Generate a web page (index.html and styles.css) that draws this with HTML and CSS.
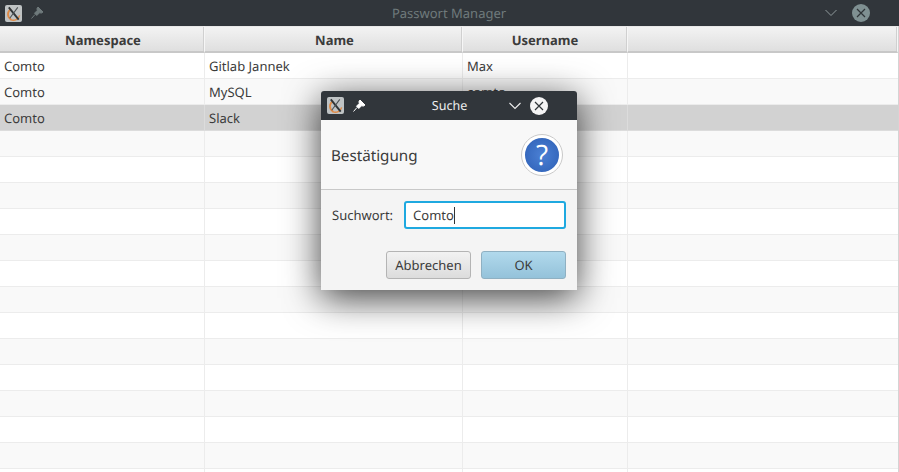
FILE: index.html
```html
<!DOCTYPE html>
<html lang="de">
<head>
    <meta charset="UTF-8">
    <title>Passwort Manager</title>
    <link rel="stylesheet" href="styles.css">
</head>
<body>
    <div class="titlebar">
        <span class="appicon">
            <svg width="17" height="17" viewBox="0 0 18 18"><path d="M6.5 15.5 C2 12.5 2 7 6.5 4.5" fill="none" stroke="#e08a45" stroke-width="1.9"/><path d="M6 15.5 C10 17.5 14.5 15 15.5 11" fill="none" stroke="#e08a45" stroke-width="1.5"/><path d="M4 2.5 L14.5 15.5" stroke="#2f3538" stroke-width="2"/><path d="M13.5 2.5 L5 14" stroke="#4a5053" stroke-width="1.1"/></svg>
        </span>
        <svg class="pin" width="14" height="14" viewBox="0 0 14 14"><path d="M8 1 L13 6 L11.5 7 L9.5 6.8 L6.8 9.5 L4.5 7.2 L7.2 4.5 L7 2.5 Z M5 8.5 L1.5 12.5" fill="#6f7a7c" stroke="#6f7a7c"/></svg>
        <span class="title-text">Passwort Manager</span>
        <svg class="chevron" width="14" height="8" viewBox="0 0 14 8"><path d="M1.5 1 L7 6.5 L12.5 1" fill="none" stroke="#8f9a9c" stroke-width="1"/></svg>
        <svg class="closebtn" width="18" height="18" viewBox="0 0 18 18"><circle cx="9" cy="9" r="9" fill="#7f9092"/><path d="M5 5 L13 13 M13 5 L5 13" stroke="#2f3538" stroke-width="1.2"/></svg>
    </div>

    <div class="table">
        <div class="row head">
            <div class="cell c1">Namespace</div>
            <div class="cell c2">Name</div>
            <div class="cell c3">Username</div>
            <div class="cell c4"></div>
        </div>
        <div class="row"><div class="cell c1">Comto</div><div class="cell c2">Gitlab Jannek</div><div class="cell c3">Max</div><div class="cell c4"></div></div>
        <div class="row odd"><div class="cell c1">Comto</div><div class="cell c2">MySQL</div><div class="cell c3">comto</div><div class="cell c4"></div></div>
        <div class="row selected"><div class="cell c1">Comto</div><div class="cell c2">Slack</div><div class="cell c3"></div><div class="cell c4"></div></div>
        <div class="row odd"><div class="cell c1"></div><div class="cell c2"></div><div class="cell c3"></div><div class="cell c4"></div></div>
        <div class="row"><div class="cell c1"></div><div class="cell c2"></div><div class="cell c3"></div><div class="cell c4"></div></div>
        <div class="row odd"><div class="cell c1"></div><div class="cell c2"></div><div class="cell c3"></div><div class="cell c4"></div></div>
        <div class="row"><div class="cell c1"></div><div class="cell c2"></div><div class="cell c3"></div><div class="cell c4"></div></div>
        <div class="row odd"><div class="cell c1"></div><div class="cell c2"></div><div class="cell c3"></div><div class="cell c4"></div></div>
        <div class="row"><div class="cell c1"></div><div class="cell c2"></div><div class="cell c3"></div><div class="cell c4"></div></div>
        <div class="row odd"><div class="cell c1"></div><div class="cell c2"></div><div class="cell c3"></div><div class="cell c4"></div></div>
        <div class="row"><div class="cell c1"></div><div class="cell c2"></div><div class="cell c3"></div><div class="cell c4"></div></div>
        <div class="row odd"><div class="cell c1"></div><div class="cell c2"></div><div class="cell c3"></div><div class="cell c4"></div></div>
        <div class="row"><div class="cell c1"></div><div class="cell c2"></div><div class="cell c3"></div><div class="cell c4"></div></div>
        <div class="row odd"><div class="cell c1"></div><div class="cell c2"></div><div class="cell c3"></div><div class="cell c4"></div></div>
        <div class="row"><div class="cell c1"></div><div class="cell c2"></div><div class="cell c3"></div><div class="cell c4"></div></div>
        <div class="row odd"><div class="cell c1"></div><div class="cell c2"></div><div class="cell c3"></div><div class="cell c4"></div></div>
        <div class="row"><div class="cell c1"></div><div class="cell c2"></div><div class="cell c3"></div><div class="cell c4"></div></div>
    </div>

    <div class="dialog">
        <div class="dialog-bar">
            <span class="appicon">
                <svg width="17" height="17" viewBox="0 0 18 18"><path d="M6.5 15.5 C2 12.5 2 7 6.5 4.5" fill="none" stroke="#e08a45" stroke-width="1.9"/><path d="M6 15.5 C10 17.5 14.5 15 15.5 11" fill="none" stroke="#e08a45" stroke-width="1.5"/><path d="M4 2.5 L14.5 15.5" stroke="#2f3538" stroke-width="2"/><path d="M13.5 2.5 L5 14" stroke="#4a5053" stroke-width="1.1"/></svg>
            </span>
            <svg class="pin" width="14" height="14" viewBox="0 0 14 14"><path d="M8 1 L13 6 L11.5 7 L9.5 6.8 L6.8 9.5 L4.5 7.2 L7.2 4.5 L7 2.5 Z M5 8.5 L1.5 12.5" fill="#fff" stroke="#fff"/></svg>
            <span class="dialog-title">Suche</span>
            <svg class="chevron" width="14" height="8" viewBox="0 0 14 8"><path d="M1.5 1 L7 6.5 L12.5 1" fill="none" stroke="#eee" stroke-width="1.1"/></svg>
            <svg class="closebtn" width="18" height="18" viewBox="0 0 18 18"><circle cx="9" cy="9" r="9" fill="#f4f4f4"/><path d="M5 5 L13 13 M13 5 L5 13" stroke="#2f3538" stroke-width="1.2"/></svg>
        </div>
        <div class="dialog-head">
            <span class="head-text">Bestätigung</span>
            <span class="question">?</span>
        </div>
        <div class="dialog-body">
            <div class="field">
                <label for="suchwort">Suchwort:</label>
                <div class="input" id="suchwort">Comto<span class="caret"></span></div>
            </div>
            <div class="buttons">
                <button type="button" class="btn">Abbrechen</button>
                <button type="button" class="btn btn-ok">OK</button>
            </div>
        </div>
    </div>
</body>
</html>
```

FILE: styles.css
```css
/* Window */
html, body {
    height: 100%;
}

body {
    margin: 0;
    overflow: hidden;
    background-color: #ffffff;
    color: #3b3b3b;
    font-family: "Noto Sans", "Open Sans", sans-serif;
    font-size: 13px;
    text-rendering: geometricPrecision;
}

.titlebar {
    display: flex;
    align-items: center;
    height: 26px;
    padding-left: 5px;
    background-color: #31363b;
}

.appicon {
    display: flex;
    width: 17px;
    height: 17px;
    border-radius: 2px;
    background-color: #bfc3c4;
}

.titlebar .pin {
    margin-left: 8px;
}

.title-text {
    flex: 1;
    margin-left: 30px;
    text-align: center;
    color: #6f7a7c;
    font-size: 13px;
}

.titlebar .chevron {
    margin-right: 14px;
}

.titlebar .closebtn {
    margin-right: 29px;
}

/* Table */
.table {
    border-right: 1px solid #d4d4d4;
}

.row {
    display: flex;
    height: 26px;
    background-color: #ffffff;
}

.row.odd {
    background-color: #f9f9f9;
}

.row.selected {
    background-color: #d2d2d2;
}

.cell {
    box-sizing: border-box;
    height: 26px;
    padding: 0 4px;
    line-height: 26px;
    border-right: 1px solid #ececec;
    border-bottom: 1px solid #ececec;
}

.row.selected .cell {
    border-color: #dcdcdc;
}

.c1 { width: 205px; }
.c2 { width: 258px; }
.c3 { width: 165px; }
.c4 { flex: 1; border-right: none; }

.row.head {
    height: 27px;
}

.head .cell {
    height: 27px;
    padding-left: 6px;
    text-align: center;
    font-weight: bold;
    background: linear-gradient(#f3f3f3, #dfdfdf);
    border-top: 1px solid #e8e8e8;
    border-right: 1px solid #f6f6f6;
    border-bottom: 2px solid #c8c8c8;
    box-shadow: inset -1px 0 0 #d0d0d0;
    line-height: 27px;
}

.head .c3 {
    padding-left: 4px;
}

/* Dialog */
.dialog {
    position: absolute;
    left: 321px;
    top: 91px;
    width: 256px;
    height: 199px;
    background-color: #f4f4f4;
    border-radius: 3px 3px 0 0;
    box-shadow: 0 8px 36px rgba(0, 0, 0, 0.75);
}

.dialog-bar {
    display: flex;
    align-items: center;
    height: 29px;
    padding-left: 6px;
    border-radius: 3px 3px 0 0;
    background-color: #31363b;
}

.dialog-bar .pin {
    margin-left: 8px;
}

.dialog-title {
    flex: 1;
    margin-left: 37px;
    text-align: center;
    color: #eeeeee;
    font-size: 12.5px;
}

.dialog-bar .chevron {
    margin: 0 8px 0 12px;
}

.dialog-bar .closebtn {
    margin-right: 29px;
}

.dialog-head {
    display: flex;
    align-items: center;
    justify-content: space-between;
    box-sizing: border-box;
    height: 70px;
    padding: 0 14px 0 10px;
    background-color: #f8f8f8;
    border-bottom: 1px solid #c9c9c9;
    font-size: 15.2px;
}

.head-text {
    margin-top: 2px;
}

.question {
    display: flex;
    align-items: center;
    justify-content: center;
    box-sizing: border-box;
    width: 42px;
    height: 42px;
    border-radius: 50%;
    border: 4px solid #ffffff;
    outline: 1px solid #c9c9c9;
    outline-offset: -1px;
    background: radial-gradient(circle, #4b80d4, #2d5fb5);
    color: #ffffff;
    font-family: "Open Sans", sans-serif;
    font-size: 28px;
}

.dialog-body {
    padding: 11px 11px 0;
}

.field {
    display: flex;
    align-items: center;
}

.input {
    box-sizing: border-box;
    width: 162px;
    height: 28px;
    margin-left: 11px;
    padding-left: 7px;
    line-height: 24px;
    background-color: #ffffff;
    border: 2px solid #1fa9e0;
    border-radius: 3px;
}

.caret {
    display: inline-block;
    width: 1px;
    height: 17px;
    vertical-align: -4px;
    background-color: #333333;
}

.buttons {
    display: flex;
    justify-content: flex-end;
    gap: 10px;
    margin-top: 22px;
}

.btn {
    box-sizing: border-box;
    width: 85px;
    height: 28px;
    padding: 0;
    font-family: inherit;
    font-size: 13px;
    text-rendering: geometricPrecision;
    color: #3b3b3b;
    background: linear-gradient(#f2f2f2, #dcdcdc);
    border: 1px solid #b4b4b4;
    border-radius: 3px;
}

.btn-ok {
    background: linear-gradient(#b1d9ec, #94c2da);
    border-color: #8fb0c2;
}
```
